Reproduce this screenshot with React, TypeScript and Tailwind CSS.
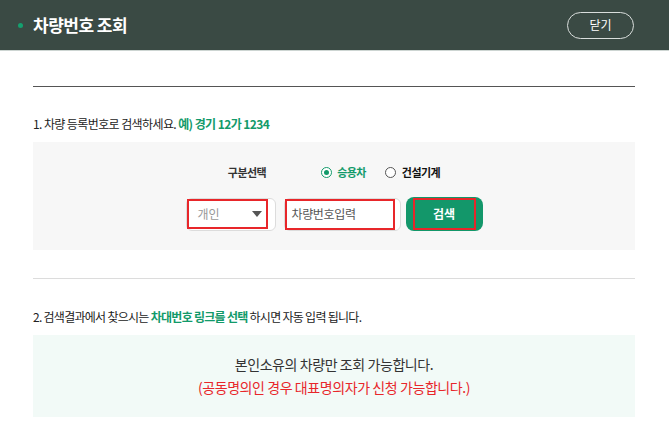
import React from 'react';

const font = { fontFamily: '"Noto Sans CJK KR", "Noto Sans", sans-serif' };

const App = () => {
  return (
    <div className="w-[669px] h-[432px] bg-white overflow-hidden text-[#222]" style={font}>
      {/* header */}
      <div className="h-[50px] bg-[#3a4a44] flex items-center justify-between pl-[18px] pr-[35px] border-b border-[#cdd5d2] box-content">
        <div className="flex items-center">
          <span className="w-[5px] h-[5px] rounded-full bg-[#14a06f] mr-[10px]" />
          <h1 className="text-[17px] font-bold text-white tracking-[-0.03em]">차량번호 조회</h1>
        </div>
        <button className="w-[67px] h-[27px] rounded-full border border-[#d9dedc] text-white text-[12px] leading-none">
          닫기
        </button>
      </div>

      <div className="pl-[33px] pr-[34px]">
        <div className="mt-[35px] border-t border-[#555]" />

        <p className="mt-[29px] text-[12px] leading-[16px] tracking-[-0.05em] text-[#222]">
          1. 차량 등록번호로 검색하세요. <span className="font-bold text-[#129a6a]">예) 경기 12가 1234</span>
        </p>

        {/* search box */}
        <div className="mt-[10px] h-[108px] bg-[#f7f7f7] flex flex-col items-center pt-[22px]">
          <div className="flex items-center h-[16px] text-[11px] tracking-[-0.05em]">
            <span className="font-bold text-[#333] mr-[55px]">구분선택</span>
            <label className="flex items-center">
              <span className="w-[11px] h-[11px] rounded-full border border-[#129a6a] bg-white flex items-center justify-center mr-[5px]">
                <span className="w-[5px] h-[5px] rounded-full bg-[#129a6a]" />
              </span>
              <span className="font-bold text-[#129a6a]">승용차</span>
            </label>
            <label className="flex items-center ml-[19px]">
              <span className="w-[11px] h-[11px] rounded-full border border-[#555] bg-white mr-[6px]" />
              <span className="font-bold text-[#111]">건설기계</span>
            </label>
          </div>

          <div className="flex items-center mt-[17px]">
            <div className="w-[90px] h-[33px] rounded-[6px] border border-[#dcdcdc] bg-white flex items-center">
              <div className="w-[81px] h-[30px] border-2 border-[#e8262a] flex items-center justify-between pl-[9px] pr-[4px]">
                <span className="text-[12px] text-[#999]">개인</span>
                <svg width="10" height="6" viewBox="0 0 10 6">
                  <path d="M0 0 L10 0 L5 6 Z" fill="#555" />
                </svg>
              </div>
            </div>
            <div className="ml-[8px] w-[117px] h-[33px] rounded-[6px] border border-[#dcdcdc] bg-white flex items-center">
              <div className="w-[110px] h-[31px] border-2 border-[#e8262a] flex items-center pl-[5px]">
                <span className="text-[12px] text-[#555] tracking-[-0.03em]">차량번호입력</span>
              </div>
            </div>
            <button className="ml-[5px] w-[77px] h-[34px] rounded-[8px] bg-[#13976a] flex items-center justify-center">
              <span className="w-[63px] h-[32px] border-2 border-[#e8262a] flex items-center justify-center text-white text-[12px] font-bold">
                검색
              </span>
            </button>
          </div>
        </div>

        <div className="mt-[28px] border-t border-[#dcdcdc]" />

        <p className="mt-[30px] text-[12px] leading-[16px] tracking-[-0.06em] text-[#222]">
          2. 검색결과에서 찾으시는 <span className="font-bold text-[#129a6a]">차대번호 링크를 선택</span> 하시면 자동 입력 됩니다.
        </p>

        <div className="mt-[10px] h-[82px] bg-[#f2faf7] flex flex-col items-center justify-center text-[14px] leading-[23px] tracking-[-0.03em]">
          <p className="text-[#333]">본인소유의 차량만 조회 가능합니다.</p>
          <p className="text-[#e8262a]">(공동명의인 경우 대표명의자가 신청 가능합니다.)</p>
        </div>
      </div>
    </div>
  );
};

export default App;
